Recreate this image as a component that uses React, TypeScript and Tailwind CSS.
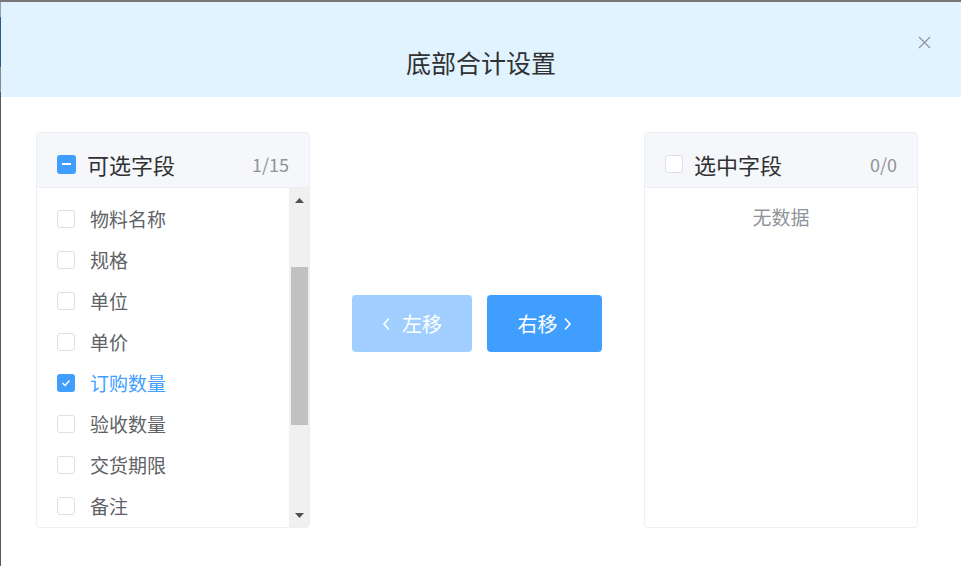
import React from "react";

const FONT = { fontFamily: '"Noto Sans CJK SC", "Noto Sans", sans-serif' };

function Box({ state }: { state: "none" | "checked" | "indeterminate" }) {
  if (state === "checked") {
    return (
      <span className="flex h-[18px] w-[18px] shrink-0 items-center justify-center rounded-[3px] bg-[#409eff]">
        <svg width="10" height="8" viewBox="0 0 10 8" fill="none">
          <path d="M1.5 4 L4 6.5 L8.5 1.5" stroke="white" strokeWidth="1.4" />
        </svg>
      </span>
    );
  }
  if (state === "indeterminate") {
    return (
      <span className="flex h-[19px] w-[19px] shrink-0 items-center justify-center rounded-[3px] bg-[#409eff]">
        <span className="h-[2px] w-[9px] bg-white" />
      </span>
    );
  }
  return <span className="block h-[18px] w-[18px] shrink-0 rounded-[3px] border border-[#dcdfe6] bg-white" />;
}

const items = ["物料名称", "规格", "单位", "单价", "订购数量", "验收数量", "交货期限", "备注"];

export default function App() {
  return (
    <div className="flex h-[566px] w-[961px] flex-col overflow-hidden bg-white" style={FONT}>
      <div className="h-[2px] w-full bg-[#777777]" />
      <div className="flex flex-1">
        <div className="flex w-[1px] flex-col">
          <div className="h-[15px] bg-[#9aa0a6]" />
          <div className="h-[50px] bg-[#2a5a8c]" />
          <div className="h-[25px] bg-[#888]" />
          <div className="flex-1 bg-[#555a60]" />
        </div>
        <div className="flex flex-1 flex-col">
          <div className="relative h-[95px] bg-[#e1f3fe]">
            <div className="pt-[43px] text-center text-[25px] leading-[34px] text-[#303133]">底部合计设置</div>
            <svg className="absolute left-[917px] top-[34px]" width="13" height="13" viewBox="0 0 13 13">
              <path d="M1 1 L12 12 M12 1 L1 12" stroke="#8e949c" strokeWidth="1.2" />
            </svg>
          </div>
          <div className="flex pl-[35px] pt-[35px]">
            {/* left panel */}
            <div className="flex h-[396px] w-[274px] flex-col overflow-hidden rounded-[4px] border border-[#ebeef5]">
              <div className="flex h-[55px] items-center border-b border-[#ebeef5] bg-[#f5f7fa] pl-[20px] pr-[20px] pt-[8px]">
                <Box state="indeterminate" />
                <span className="ml-[11px] text-[22px] leading-[28px] text-[#303133]">可选字段</span>
                <span className="ml-auto text-[18px] leading-[24px] text-[#909399]">1/15</span>
              </div>
              <div className="flex flex-1">
                <div className="flex-1 pt-[10px]">
                  {items.map((t) => {
                    const c = t === "订购数量";
                    return (
                      <div key={t} className="flex h-[41px] items-center pl-[20px]">
                        <Box state={c ? "checked" : "none"} />
                        <span className={`ml-[15px] text-[19px] leading-[26px] ${c ? "text-[#409eff]" : "text-[#606266]"}`}>{t}</span>
                      </div>
                    );
                  })}
                </div>
                <div className="flex w-[20px] flex-col items-center bg-[#f0f0f0]">
                  <div className="flex h-[24px] items-center justify-center">
                    <svg width="9" height="5" viewBox="0 0 9 5"><path d="M0 5 L4.5 0 L9 5 Z" fill="#505050" /></svg>
                  </div>
                  <div className="mt-[55px] h-[158px] w-[17px] bg-[#c1c1c1]" />
                  <div className="mt-auto flex h-[24px] items-center justify-center">
                    <svg width="9" height="5" viewBox="0 0 9 5"><path d="M0 0 L9 0 L4.5 5 Z" fill="#505050" /></svg>
                  </div>
                </div>
              </div>
            </div>
            {/* buttons */}
            <div className="flex w-[334px] gap-[15px] pl-[42px] pt-[163px]">
              <div className="flex h-[57px] w-[120px] items-center justify-center rounded-[4px] bg-[#a0cfff] text-[20px] text-white">
                <svg width="10" height="14" viewBox="0 0 10 14" className="mr-[10px]"><path d="M7 1.5 L2 7 L7 12.5" stroke="white" strokeWidth="1.6" fill="none" /></svg>
                左移
              </div>
              <div className="flex h-[57px] w-[115px] items-center justify-center rounded-[4px] bg-[#409eff] text-[20px] text-white">
                右移
                <svg width="10" height="14" viewBox="0 0 10 14" className="ml-[4px]"><path d="M3 1.5 L8 7 L3 12.5" stroke="white" strokeWidth="1.6" fill="none" /></svg>
              </div>
            </div>
            {/* right panel */}
            <div className="flex h-[396px] w-[274px] flex-col overflow-hidden rounded-[4px] border border-[#ebeef5]">
              <div className="flex h-[55px] items-center border-b border-[#ebeef5] bg-[#f5f7fa] pl-[20px] pr-[20px] pt-[8px]">
                <Box state="none" />
                <span className="ml-[11px] text-[22px] leading-[28px] text-[#303133]">选中字段</span>
                <span className="ml-auto text-[18px] leading-[24px] text-[#909399]">0/0</span>
              </div>
              <div className="pt-[16px] text-center text-[19px] leading-[26px] text-[#909399]">无数据</div>
            </div>
          </div>
        </div>
      </div>
    </div>
  );
}
